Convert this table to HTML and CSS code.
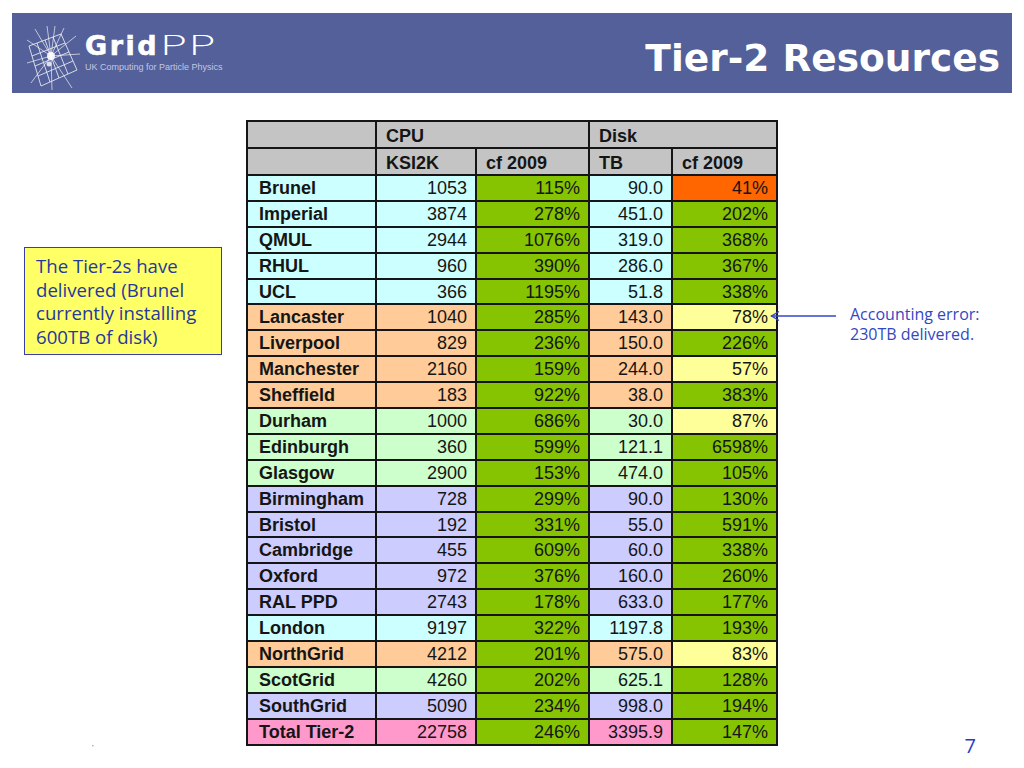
FILE: index.html
```html
<!DOCTYPE html>
<html>
<head>
<meta charset="utf-8">
<link rel="stylesheet" href="styles.css">
</head>
<body>
<header class="banner">
  <div class="logo">
    <svg class="logo-icon" width="54" height="64" viewBox="0 0 54 64">
      <g stroke="#ffffff" stroke-width="0.9" fill="none" opacity="0.85">
        <path d="M2 20 L14 60 M10 17 L23 56 M18 14 L32 52 M26 11 L41 48 M34 8 L50 44"/>
        <path d="M2 20 L34 8 M5 30 L38 17 M8 40 L42 26 M11 50 L46 35 M14 60 L50 44"/>
      </g>
      <g stroke="#ffffff" stroke-width="0.8" opacity="0.8">
        <path d="M24 30 L20 0 M24 30 L28 0 M24 30 L37 2 M24 30 L8 3 M24 30 L0 14 M24 30 L49 10 M24 30 L53 28 M24 30 L45 62 M24 30 L25 64 M24 30 L4 57 M24 30 L0 37"/>
      </g>
      <circle cx="24" cy="30" r="4" fill="#ffffff" opacity="0.9"/>
      <circle cx="22" cy="38" r="2.5" fill="#ffffff" opacity="0.8"/>
    </svg>
    <div class="logo-text">
      <div class="logo-name"><span class="grid">Grid</span><span class="pp">PP</span></div>
      <div class="logo-sub">UK Computing for Particle Physics</div>
    </div>
  </div>
  <h1 class="title">Tier-2 Resources</h1>
</header>

<main class="slide">
  <div class="left-col">
    <div class="callout">The Tier-2s have delivered (Brunel currently installing 600TB of disk)</div>
    <span class="tick">'</span>
  </div>

  <table class="res">
    <colgroup>
      <col class="w-name"><col class="w-ksi"><col class="w-cf"><col class="w-tb"><col class="w-cf2">
    </colgroup>
    <tr class="hd"><td></td><td colspan="2">CPU</td><td colspan="2">Disk</td></tr>
    <tr class="hd"><td></td><td>KSI2K</td><td>cf 2009</td><td>TB</td><td>cf 2009</td></tr>
    <tr class="cy"><td>Brunel</td><td>1053</td><td class="gr">115%</td><td>90.0</td><td class="rd">41%</td></tr>
    <tr class="cy"><td>Imperial</td><td>3874</td><td class="gr">278%</td><td>451.0</td><td class="gr">202%</td></tr>
    <tr class="cy"><td>QMUL</td><td>2944</td><td class="gr">1076%</td><td>319.0</td><td class="gr">368%</td></tr>
    <tr class="cy"><td>RHUL</td><td>960</td><td class="gr">390%</td><td>286.0</td><td class="gr">367%</td></tr>
    <tr class="cy"><td>UCL</td><td>366</td><td class="gr">1195%</td><td>51.8</td><td class="gr">338%</td></tr>
    <tr class="or"><td>Lancaster</td><td>1040</td><td class="gr">285%</td><td>143.0</td><td class="ye">78%</td></tr>
    <tr class="or"><td>Liverpool</td><td>829</td><td class="gr">236%</td><td>150.0</td><td class="gr">226%</td></tr>
    <tr class="or"><td>Manchester</td><td>2160</td><td class="gr">159%</td><td>244.0</td><td class="ye">57%</td></tr>
    <tr class="or"><td>Sheffield</td><td>183</td><td class="gr">922%</td><td>38.0</td><td class="gr">383%</td></tr>
    <tr class="lg"><td>Durham</td><td>1000</td><td class="gr">686%</td><td>30.0</td><td class="ye">87%</td></tr>
    <tr class="lg"><td>Edinburgh</td><td>360</td><td class="gr">599%</td><td>121.1</td><td class="gr">6598%</td></tr>
    <tr class="lg"><td>Glasgow</td><td>2900</td><td class="gr">153%</td><td>474.0</td><td class="gr">105%</td></tr>
    <tr class="lv"><td>Birmingham</td><td>728</td><td class="gr">299%</td><td>90.0</td><td class="gr">130%</td></tr>
    <tr class="lv"><td>Bristol</td><td>192</td><td class="gr">331%</td><td>55.0</td><td class="gr">591%</td></tr>
    <tr class="lv"><td>Cambridge</td><td>455</td><td class="gr">609%</td><td>60.0</td><td class="gr">338%</td></tr>
    <tr class="lv"><td>Oxford</td><td>972</td><td class="gr">376%</td><td>160.0</td><td class="gr">260%</td></tr>
    <tr class="lv"><td>RAL PPD</td><td>2743</td><td class="gr">178%</td><td>633.0</td><td class="gr">177%</td></tr>
    <tr class="cy"><td>London</td><td>9197</td><td class="gr">322%</td><td>1197.8</td><td class="gr">193%</td></tr>
    <tr class="or"><td>NorthGrid</td><td>4212</td><td class="gr">201%</td><td>575.0</td><td class="ye">83%</td></tr>
    <tr class="lg"><td>ScotGrid</td><td>4260</td><td class="gr">202%</td><td>625.1</td><td class="gr">128%</td></tr>
    <tr class="lv"><td>SouthGrid</td><td>5090</td><td class="gr">234%</td><td>998.0</td><td class="gr">194%</td></tr>
    <tr class="pk"><td>Total Tier-2</td><td>22758</td><td class="gr">246%</td><td>3395.9</td><td class="gr">147%</td></tr>
  </table>

  <div class="right-col">
    <div class="note">
      <svg class="arrow" width="66" height="12" viewBox="0 0 66 12">
        <path d="M1 6 L66 6" stroke="#3347c4" stroke-width="1.4" fill="none"/>
        <path d="M9 1.5 L1.5 6 L9 10.5" stroke="#3347c4" stroke-width="1.4" fill="none"/>
      </svg>
      <div class="note-text">Accounting error:<br>230TB delivered.</div>
    </div>
    <div class="page-num">7</div>
  </div>
</main>
</body>
</html>
```

FILE: styles.css
```css
html, body {
  margin: 0;
  padding: 0;
  background: #ffffff;
}

body {
  width: 1024px;
  height: 768px;
  overflow: hidden;
  font-family: "Liberation Sans", Arial, sans-serif;
}

.banner {
  margin: 13px 12px 0 12px;
  height: 80px;
  background: #536099;
  display: flex;
  align-items: center;
  justify-content: space-between;
  padding: 0 12px 0 15px;
  box-sizing: border-box;
}

.logo {
  display: flex;
  align-items: flex-start;
  gap: 4px;
  margin-top: 12px;
}

.logo-icon {
  display: block;
  margin-top: -2px;
}

.logo-text {
  display: flex;
  flex-direction: column;
  margin-top: 3px;
}

.logo-name {
  font-family: "DejaVu Sans", sans-serif;
  font-size: 27px;
  line-height: 30px;
  color: #ffffff;
  white-space: nowrap;
}

.logo-name .grid {
  font-weight: 700;
  letter-spacing: 2.5px;
  -webkit-text-stroke: 0.6px #ffffff;
}

.logo-name .pp {
  display: inline-block;
  font-weight: 200;
  margin-left: 0;
  transform: scaleX(1.75);
  transform-origin: left center;
}

.logo-sub {
  font-family: "Liberation Sans", Arial, sans-serif;
  font-size: 9px;
  line-height: 12px;
  color: #c2c7e3;
  white-space: nowrap;
}

.title {
  margin: 0;
  padding-top: 10px;
  font-family: "DejaVu Sans", Verdana, sans-serif;
  font-weight: 700;
  font-size: 37.5px;
  color: #ffffff;
  letter-spacing: 0;
}

.slide {
  display: grid;
  grid-template-columns: 198px 530px 1fr;
  column-gap: 24px;
  margin-top: 27px;
  padding-left: 24px;
}

.left-col {
  display: flex;
  flex-direction: column;
  justify-content: space-between;
}

.callout {
  margin-top: 127px;
  box-sizing: border-box;
  width: 198px;
  height: 108px;
  background: #ffff66;
  border: 1px solid #3a3fa8;
  padding: 6px 4px 0 11px;
  font-family: "Open Sans", "Noto Sans", sans-serif;
  font-size: 18.6px;
  line-height: 23.5px;
  color: #24389e;
}

.tick {
  margin: 0 0 -6px 68px;
  font-size: 8px;
  color: #3347c4;
}

.res {
  border-collapse: collapse;
  width: 530px;
  table-layout: fixed;
  border: 2px solid #111;
  font-size: 18px;
  color: #151515;
}

.w-name { width: 129px; }
.w-ksi { width: 100px; }
.w-cf { width: 113px; }
.w-tb { width: 83px; }
.w-cf2 { width: 105px; }

.res td {
  border: 2px solid #151515;
  height: 23.9px;
  padding: 0 8px 0 8px;
  text-align: right;
  line-height: 20px;
  white-space: nowrap;
}

.res td:first-child {
  text-align: left;
  font-weight: 700;
  padding-left: 11px;
}

.res tr.hd td {
  background: #c4c4c4;
  font-weight: 700;
  text-align: left;
  height: 23px;
  padding-left: 9px;
  padding-top: 2px;
}

.res tr.cy td { background: #ccffff; }
.res tr.or td { background: #ffcc99; }
.res tr.lg td { background: #ccffcc; }
.res tr.lv td { background: #ccccff; }
.res tr.pk td { background: #ff99cc; }

.res tr td.gr { background: #86c402; }
.res tr td.ye { background: #ffff99; }
.res tr td.rd { background: #ff6600; }

.right-col {
  display: flex;
  flex-direction: column;
  justify-content: space-between;
  margin-left: -24px;
}

.note {
  margin-top: 184px;
  display: flex;
  align-items: flex-start;
  gap: 14px;
}

.arrow {
  display: block;
  margin-left: -6px;
  margin-top: 6px;
}

.note-text {
  font-family: "Open Sans", "Noto Sans", sans-serif;
  font-size: 16px;
  line-height: 20px;
  color: #3347c4;
}

.page-num {
  align-self: flex-end;
  margin: 0 48px -10px 0;
  font-family: "Open Sans", sans-serif;
  font-size: 20px;
  line-height: 20px;
  color: #2a3bc8;
}
```
